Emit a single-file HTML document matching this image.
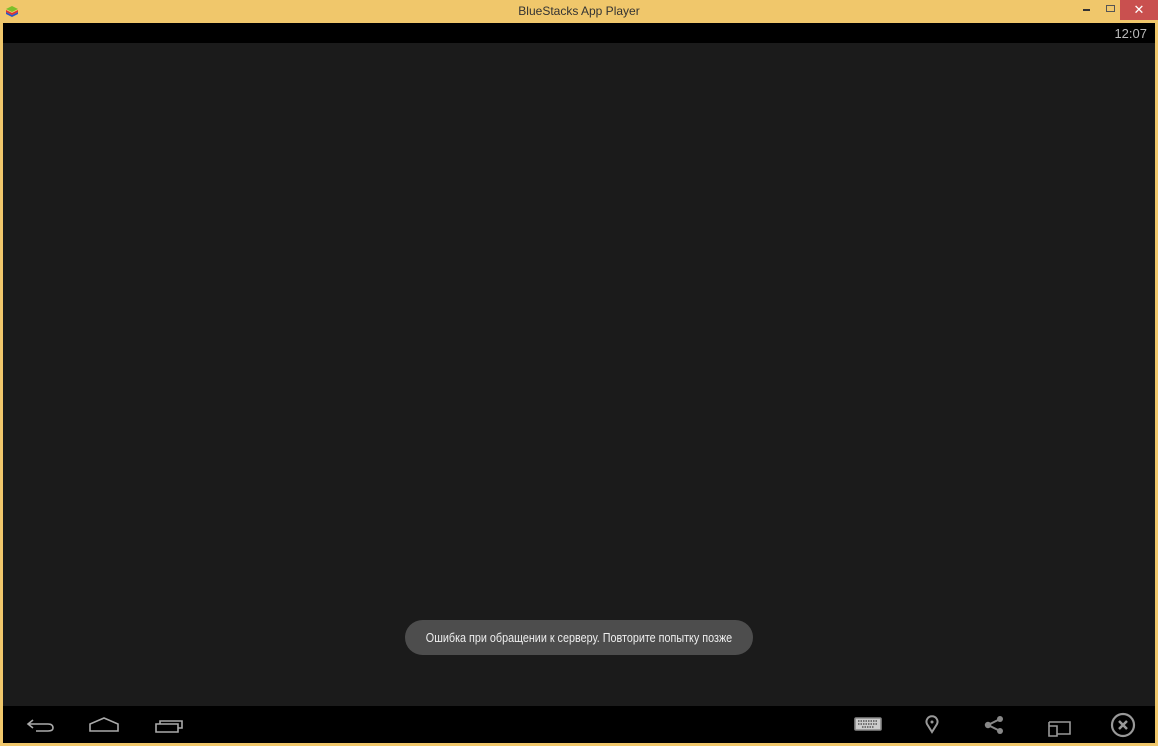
<!DOCTYPE html>
<html><head><meta charset="utf-8"><style>
body{margin:0;width:1158px;height:746px;background:#f0c76b;position:relative;overflow:hidden;font-family:"Liberation Sans",sans-serif}
.title{position:absolute;top:0;left:0;width:1158px;height:23px;text-align:center;font-size:12px;line-height:23px;color:#333}
.status{position:absolute;left:3px;top:23px;width:1152px;height:20px;background:#000}
.clock{position:absolute;right:8px;top:3px;color:#bbb;font-size:13px}
.content{position:absolute;left:3px;top:43px;width:1152px;height:663px;background:#1b1b1b}
.nav{position:absolute;left:3px;top:706px;width:1152px;height:37px;background:#000}
.toast{position:absolute;left:405px;top:620px;width:348px;height:35px;border-radius:18px;background:#4d4d4d;line-height:35px;color:#eee;font-size:13px}
.toast span{position:absolute;left:50%;top:0;transform:translateX(-50%) scaleX(0.83);white-space:nowrap;font-family:"Liberation Sans Narrow","Liberation Sans",sans-serif}
.close{position:absolute;left:1120px;top:0;width:38px;height:20px;background:#c9504f;color:#fff;text-align:center;line-height:20px;font-size:13px}
svg{position:absolute}
</style></head><body>
<div class="title">BlueStacks App Player</div>
<svg style="left:5px;top:5px" width="14" height="12" viewBox="0 0 14 12"><path d="M1 7 L7 10 L13 7 L13 9 L7 12 L1 9Z" fill="#2a56c6"/><path d="M1 5 L7 8 L13 5 L13 7 L7 10 L1 7Z" fill="#d33"/><path d="M1 4 L7 1 L13 4 L7 7Z" fill="#7cbf2a"/></svg>
<div style="position:absolute;left:1083px;top:9px;width:7px;height:2px;background:#333"></div>
<div style="position:absolute;left:1106px;top:5px;width:7px;height:5px;border:1px solid #555"></div>
<div class="close">✕</div>
<div class="status"><div class="clock">12:07</div></div>
<div class="content"></div>
<div class="toast"><span>Ошибка при обращении к серверу. Повторите попытку позже</span></div>
<div class="nav"></div>
<svg style="left:0;top:706px" width="1158" height="37" viewBox="0 706 1158 37" fill="none" stroke="#aaa" stroke-width="1.6">
<path d="M33 720 L28 724 L33 728 M28 724 L48 724 Q53 724 53 728 Q53 731 48 731 L36 731"/>
<path d="M90 731 L90 724 L104 718 L118 724 L118 731Z"/>
<path d="M156 724 L178 724 L178 732 L156 732Z M160 724 L160 721 L182 721 L182 728 L178 728"/>
<rect x="855" y="718" width="26" height="12" rx="1" fill="#ccc" stroke="#888"/>
<path d="M858 721h20M858 724h20M862 727h12" stroke="#555" stroke-dasharray="1.5 1"/>
<path d="M932 732 L927 724 A5.5 5.5 0 1 1 937 724Z" stroke="#999" stroke-width="2"/>
<circle cx="932" cy="722" r="1.5" fill="#999" stroke="none"/>
<path d="M1000 719 L988 725 L1000 731" stroke="#888" stroke-width="2"/>
<circle cx="1000" cy="719" r="3" fill="#888" stroke="none"/><circle cx="988" cy="725" r="3.2" fill="#888" stroke="none"/><circle cx="1000" cy="731" r="3" fill="#888" stroke="none"/>
<path d="M1049 722 h21 v12 h-13 M1049 722 v4 M1049 726 h8 v10 h-8Z" stroke="#999"/>
<circle cx="1123" cy="725" r="11" stroke="#999" stroke-width="2.2"/>
<path d="M1119 721 L1127 729 M1127 721 L1119 729" stroke="#999" stroke-width="2.5"/>
</svg>
</body></html>
